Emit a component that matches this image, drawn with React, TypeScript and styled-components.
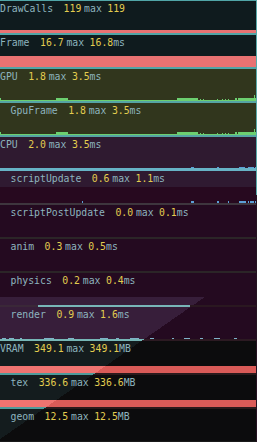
import React from "react";
import styled, { createGlobalStyle } from "styled-components";

const DIAG = (a: string, b: string) =>
  `linear-gradient(145.25deg, ${a} 70.8%, ${b} 70.8%) fixed`;

const Global = createGlobalStyle`
  html, body { margin: 0; padding: 0; }
  body {
    background: linear-gradient(to bottom, #58a9aa 0 195px, #241221 195px);
    font-family: "DejaVu Sans Mono", "Liberation Mono", monospace;
  }
`;

const Panel = styled.div`
  width: 256px;
  display: flex;
  flex-direction: column;
`;

const Gap = styled.div<{ $h: number; $bg: string }>`
  height: ${(p) => p.$h}px;
  background: ${(p) => p.$bg};
`;

const Row = styled.div<{ $bg: string }>`
  height: 32px;
  display: flex;
  flex-direction: column;
  background: ${(p) => p.$bg};
  overflow: hidden;
`;

const Caption = styled.div<{ $indent: boolean }>`
  padding: 2px 0 0 ${(p) => (p.$indent ? 10.5 : 0)}px;
  font-size: 9.8px;
  line-height: 11px;
  white-space: pre;
  color: #8db4be;
`;

const Label = styled.span`
  margin-right: 10.5px;
`;

const Num = styled.span<{ $after?: number }>`
  color: #e3cd4f;
  margin-right: ${(p) => p.$after ?? 0}px;
`;

const Dim = styled.span<{ $after?: number }>`
  margin-right: ${(p) => p.$after ?? 0}px;
`;

const Band = styled.div<{ $h: number; $bg: string }>`
  margin-top: auto;
  height: ${(p) => p.$h}px;
  background: ${(p) => p.$bg};
`;

const Graph = styled.svg`
  margin-top: auto;
  display: block;
  flex-shrink: 0;
`;

type Bar = [number, number, number, number]; // x, y, w, h

const GPU_BARS: Bar[] = [
  [0, 5, 256, 1],
  [0, 3, 1, 2],
  [56, 3, 12, 2],
  [177, 3, 21, 2],
  [200, 4, 1, 1],
  [203, 4, 1, 1],
  [217, 4, 1, 1],
  [222, 4, 1, 1],
  [225, 4, 1, 1],
  [228, 4, 1, 1],
  [235, 3, 2, 2],
  [238, 3, 18, 2],
  [254, 0, 1, 5],
];

const CPU_BARS: Bar[] = [
  [191, 0, 3, 1],
  [217, 0, 2, 1],
  [239, 0, 6, 1],
  [248, 0, 6, 1],
  [255, 0, 1, 1],
];

const SCRIPT_BARS: Bar[] = [
  [82, 0, 1, 2],
  [191, 0, 3, 2],
  [217, 0, 2, 2],
  [228, 0, 1, 2],
  [239, 0, 7, 2],
  [248, 0, 1, 2],
  [250, 0, 4, 2],
  [255, 0, 1, 2],
];

const RENDER_BARS: Bar[] = [
  [2, 1, 4, 1],
  [9, 1, 5, 1],
  [20, 1, 2, 1],
  [44, 1, 10, 1],
  [68, 1, 6, 1],
  [100, 1, 8, 1],
  [116, 1, 3, 1],
  [130, 1, 9, 1],
  [150, 1, 4, 1],
  [172, 1, 2, 1],
  [184, 1, 6, 1],
  [200, 1, 3, 1],
  [214, 1, 6, 1],
  [234, 1, 3, 1],
];

const Bars: React.FC<{ bars: Bar[]; h: number; color: string; base?: string }> = ({
  bars,
  h,
  color,
  base,
}) => (
  <Graph width={256} height={h} viewBox={`0 0 256 ${h}`}>
    {base && <rect x={0} y={h - 1} width={256} height={1} fill={base} />}
    {bars.map(([x, y, w, hh], i) => (
      <rect key={i} x={x} y={y} width={w} height={hh} fill={color} />
    ))}
  </Graph>
);

type Stat = {
  label: string;
  v: string;
  m: string;
  unit: string;
  indent?: boolean;
  bg: string;
  sep: string;
  graph?: React.ReactNode;
};

const PINK = "#e87272";
const PINK_DIAG = DIAG("#ef7370", "#da5b58");
const DARK_DIAG = DIAG("#141c1e", "#0c0c0d");
const TEAL_SEP_DIAG = DIAG("#4e9b9b", "#2a1a1c");

const stats: Stat[] = [
  {
    label: "DrawCalls",
    v: "119",
    m: "119",
    unit: "",
    bg: "#0f1b1e",
    sep: "#50a5a7",
    graph: <Band $h={3} $bg={PINK} />,
  },
  {
    label: "Frame",
    v: "16.7",
    m: "16.8",
    unit: "ms",
    bg: "#0f1b1e",
    sep: "#50a5a7",
    graph: <Band $h={11} $bg={PINK} />,
  },
  {
    label: "GPU",
    v: "1.8",
    m: "3.5",
    unit: "ms",
    bg: "#31361d",
    sep: "#55a4a4",
    graph: <Bars bars={GPU_BARS} h={6} color="#6ccf70" />,
  },
  {
    label: "GpuFrame",
    indent: true,
    v: "1.8",
    m: "3.5",
    unit: "ms",
    bg: "#31361d",
    sep: "#55a4a4",
    graph: <Bars bars={GPU_BARS} h={6} color="#6ccf70" />,
  },
  {
    label: "CPU",
    v: "2.0",
    m: "3.5",
    unit: "ms",
    bg: "#2f1a30",
    sep: "#67b3c6",
    graph: <Bars bars={CPU_BARS} h={2} color="#5c9fd6" base="#67b3c6" />,
  },
  {
    label: "scriptUpdate",
    indent: true,
    v: "0.6",
    m: "1.1",
    unit: "ms",
    bg: "linear-gradient(to bottom, #2f1a31 0 16px, #27091f 16px)",
    sep: "#3e363e",
    graph: <Bars bars={SCRIPT_BARS} h={2} color="#5c9fd6" />,
  },
  {
    label: "scriptPostUpdate",
    indent: true,
    v: "0.0",
    m: "0.1",
    unit: "ms",
    bg: "#240a20",
    sep: "#2b2527",
  },
  {
    label: "anim",
    indent: true,
    v: "0.3",
    m: "0.5",
    unit: "ms",
    bg: "#240a20",
    sep: "#2b2527",
  },
  {
    label: "physics",
    indent: true,
    v: "0.2",
    m: "0.4",
    unit: "ms",
    bg: `linear-gradient(to bottom, #240a20 0 24px, transparent 24px), ${DIAG(
      "#371e3a",
      "#240a20"
    )}`,
    sep: "linear-gradient(to right, #3a2838 38px, #78b6b8 38px, #78b6b8 190px, #2a1820 190px)",
  },
  {
    label: "render",
    indent: true,
    v: "0.9",
    m: "1.6",
    unit: "ms",
    bg: DIAG("#371e3a", "#240a20"),
    sep: DIAG("#76b6b6", "#2c1a22"),
    graph: <Bars bars={RENDER_BARS} h={2} color="#7fb2c8" />,
  },
  {
    label: "VRAM",
    v: "349.1",
    m: "349.1",
    unit: "MB",
    bg: DARK_DIAG,
    sep: TEAL_SEP_DIAG,
    graph: <Band $h={7} $bg={PINK_DIAG} />,
  },
  {
    label: "tex",
    indent: true,
    v: "336.6",
    m: "336.6",
    unit: "MB",
    bg: DARK_DIAG,
    sep: TEAL_SEP_DIAG,
    graph: <Band $h={7} $bg={PINK_DIAG} />,
  },
  {
    label: "geom",
    indent: true,
    v: "12.5",
    m: "12.5",
    unit: "MB",
    bg: DARK_DIAG,
    sep: "#1a1a1a",
  },
];

export default function App() {
  return (
    <>
      <Global />
      <Panel>
        <Gap $h={1} $bg="#50a5a7" />
        {stats.map((s, i) => (
          <React.Fragment key={s.label}>
            <Row $bg={s.bg}>
              <Caption $indent={!!s.indent}>
                <Label>{s.label}</Label>
                <Num $after={2.8}>{s.v}</Num>
                <Dim $after={5.5}>max</Dim>
                <Num>{s.m}</Num>
                <Dim>{s.unit}</Dim>
              </Caption>
              {s.graph}
            </Row>
            <Gap $h={i === stats.length - 1 ? 1 : 2} $bg={s.sep} />
          </React.Fragment>
        ))}
      </Panel>
    </>
  );
}
